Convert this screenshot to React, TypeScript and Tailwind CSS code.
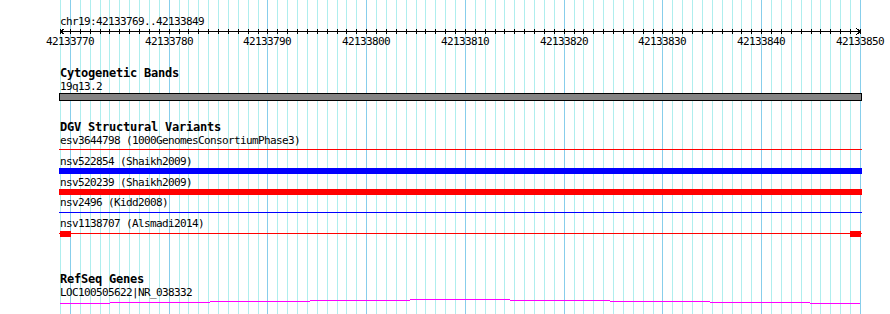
import React from 'react';

const START = 42133769;
const BASES = 81;
const LEFT = 60;
const SPAN = 800;

const px = (pos: number) => Math.round(LEFT + ((pos - START) * SPAN) / BASES);

const positions = Array.from({ length: BASES + 1 }, (_, i) => START + i);
const majors = positions.filter((p) => p % 10 === 0);

const mono = "font-['DejaVu_Sans_Mono',monospace] text-[11px] tracking-[-0.62px] leading-[13px] text-black whitespace-pre";
const title = "font-['DejaVu_Sans_Mono',monospace] font-bold text-[12px] tracking-[-0.22px] leading-[13px] text-black whitespace-pre";

// intron hat of the RefSeq gene, stepped the way GD rasterizes it
const HAT: [number, number, number][] = [
  [60, 110, 4],
  [110, 210, 3],
  [210, 310, 2],
  [310, 410, 1],
  [410, 510, 0],
  [510, 610, 1],
  [610, 710, 2],
  [710, 810, 3],
  [810, 860, 4],
];

const Grid: React.FC = () => (
  <svg
    className="absolute inset-0 pointer-events-none"
    width={890}
    height={314}
    shapeRendering="crispEdges"
  >
    {positions.map((p) => (
      <rect
        key={p}
        x={px(p)}
        y={0}
        width={1}
        height={314}
        fill={p % 10 === 0 ? '#87ceeb' : '#afeeee'}
      />
    ))}
  </svg>
);

const Ruler: React.FC = () => (
  <div>
    <svg width={890} height={7} className="block" shapeRendering="crispEdges">
      <rect x={60} y={3} width={801} height={1} fill="#000" />
      {positions.map((p) => (
        <rect key={p} x={px(p)} y={1} width={1} height={5} fill="#000" />
      ))}
      <path d="M64.5 0.5 L60.5 3.5 L64.5 6.5" stroke="#000" fill="none" />
      <path d="M856.5 0.5 L860.5 3.5 L856.5 6.5" stroke="#000" fill="none" />
    </svg>
    <div className="relative h-[13px]">
      {majors.map((p) => (
        <span
          key={p}
          className={`absolute top-0 w-[48px] text-center ${mono}`}
          style={{ left: px(p) - 24 }}
        >
          {p}
        </span>
      ))}
    </div>
  </div>
);

const Label: React.FC<{ children: React.ReactNode }> = ({ children }) => (
  <div className={`pl-[60px] h-[13px] ${mono}`}>{children}</div>
);

const Title: React.FC<{ children: React.ReactNode }> = ({ children }) => (
  <div className={`pl-[60px] h-[13px] ${title}`}>{children}</div>
);

const App: React.FC = () => {
  return (
    <div className="relative w-[890px] h-[314px] bg-white overflow-hidden">
      <Grid />
      <div className="relative flex flex-col">
        <div className="pt-[15px]">
          <Label>chr19:42133769..42133849</Label>
        </div>
        <Ruler />

        {/* Cytogenetic Bands */}
        <div className="mt-[19px]">
          <Title>Cytogenetic Bands</Title>
          <Label>19q13.2</Label>
          <div className="ml-[59px] w-[803px] h-[8px] border border-black bg-[#848484]" />
        </div>

        {/* DGV Structural Variants */}
        <div className="mt-[20px]">
          <Title>DGV Structural Variants</Title>
          <Label>esv3644798 (1000GenomesConsortiumPhase3)</Label>
          <div className="relative ml-[59px] w-[803px] h-[6px]">
            <div className="absolute left-0 right-0 top-[2px] h-px bg-[#ff0000]" />
          </div>

          <div className="mt-[2px]">
            <Label>nsv522854 (Shaikh2009)</Label>
            <div className="ml-[59px] w-[803px] h-[6px] bg-[#0000ff]" />
          </div>

          <div className="mt-[2px]">
            <Label>nsv520239 (Shaikh2009)</Label>
            <div className="ml-[59px] w-[803px] h-[6px] bg-[#ff0000]" />
          </div>

          <div className="mt-px">
            <Label>nsv2496 (Kidd2008)</Label>
            <div className="relative mt-px ml-[59px] w-[803px] h-[6px]">
              <div className="absolute left-0 right-0 top-[2px] h-px bg-[#0000ff]" />
            </div>
          </div>

          <div className="mt-px">
            <Label>nsv1138707 (Alsmadi2014)</Label>
            <div className="relative mt-px ml-[59px] w-[803px] h-[6px]">
              <div className="absolute left-0 right-0 top-[2px] h-px bg-[#ff0000]" />
              <div className="absolute left-px top-0 w-[11px] h-[6px] bg-[#ff0000]" />
              <div className="absolute left-[791px] top-0 w-[11px] h-[6px] bg-[#ff0000]" />
            </div>
          </div>
        </div>

        {/* RefSeq Genes */}
        <div className="mt-[36px]">
          <Title>RefSeq Genes</Title>
          <Label>LOC100505622|NR_038332</Label>
          <svg width={890} height={5} className="block" shapeRendering="crispEdges">
            {HAT.map(([x1, x2, y]) => (
              <rect key={x1} x={x1} y={y} width={x2 - x1} height={1} fill="#ff00ff" />
            ))}
          </svg>
        </div>
      </div>
    </div>
  );
};

export default App;
